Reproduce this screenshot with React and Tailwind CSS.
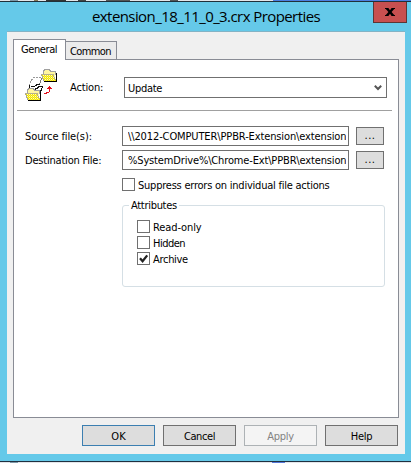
import React from "react";

const Check = () => (
  <svg width="11" height="11" viewBox="0 0 11 11">
    <path d="M2 5.2 L4.6 8.2 L9.2 2.4" fill="none" stroke="#222" strokeWidth="2.3" />
  </svg>
);

function CheckRow({ label, checked, track = "" }) {
  return (
    <div className="flex h-4 items-start">
      <span className="mt-[1px] h-[13px] w-[13px] shrink-0 border border-[#707070] bg-white">{checked && <Check />}</span>
      <span className={`ml-[3px] ${track}`}>{label}</span>
    </div>
  );
}

function FileRow({ label, value, track = "", vtrack = "" }) {
  return (
    <div className="flex h-5 items-center">
      <span className={`w-[97px] shrink-0 pt-[2px] leading-[18px] ${track}`}>{label}</span>
      <div className="flex h-5 w-[227px] shrink-0 items-center border border-[#707070] bg-white pl-[5px] pr-[2px]">
        <span className={`block w-full overflow-hidden pt-[2px] leading-[16px] ${vtrack}`}>{value}</span>
      </div>
      <button className="ml-[7px] flex h-[18px] w-7 shrink-0 items-center justify-center border border-[#707070] bg-[#dddddd] leading-4 tracking-[0.5px]">...</button>
    </div>
  );
}

const Folder = ({ x, y }) => (
  <g transform={`translate(${x} ${y})`}>
    <path d="M2 2 H3 V1 H8 V2 H9 V3 H14 V10 H2z" fill="#fff6a0" />
    <path d="M2 6 V2 H3 V1 H8 V2 H9 V3 H14 V6" transform="translate(.5 -.5)" fill="none" stroke="#a0a0a0" />
    <path d="M0 5 H12 L15 12 H3z" fill="url(#dots)" />
    <path d="M0 5.5 H12 L14.5 11" fill="none" stroke="#b5b090" />
    <path d="M0.5 6 L3 12" fill="none" stroke="#a0a0a0" />
    <path d="M15 4 H16 V13 H3 V12 H15z" fill="#000" />
  </g>
);

const FilesIcon = () => (
  <svg className="shrink-0" width="33" height="33" viewBox="0 0 33 33" shapeRendering="crispEdges">
    <defs>
      <pattern id="dots" width="2" height="2" patternUnits="userSpaceOnUse">
        <rect width="2" height="2" fill="#f2e600" />
        <rect width="1" height="1" fill="#fffbb8" />
        <rect x="1" y="1" width="1" height="1" fill="#f8ee50" />
      </pattern>
    </defs>
    <Folder x="16" y="0" />
    <path d="M8 8.5 H16.5 L14 16.5 L5 18.5 V13z" fill="#fff" />
    <path d="M15.5 8.5 H8.5 L5.5 12.5 L4.5 16" fill="none" stroke="#999" strokeDasharray="2 1" />
    <path d="M16.5 9 L15.5 13 L13.5 16" fill="none" stroke="#777" />
    <path d="M5 17.5 L8 19 L11.5 15.5 L15 16 L17.5 18 L14 24 H6z" fill="#fff" />
    <path d="M4.5 16 V19 L7.5 21 M6 17.5 H9.5 L12 15.5 H14.5 M10 19.5 H12 L14 17.5 H17.5 L16.5 21 L14 24 M10 20 L12.5 23" fill="none" stroke="#111" />
    <Folder x="0" y="19" />
    <path d="M19 24.5 H22 M21 23.5 H24 M24.5 23 V18" fill="none" stroke="#e0101c" strokeWidth="1" />
    <path d="M24 17h1v1h1v1h1v1h-5v-1h1v-1h1z" fill="#e0101c" />
  </svg>
);

function DialogButton({ label, look, track = "" }) {
  return (
    <button className={`flex h-[21px] w-[73px] items-center justify-center border ${look}`}>
      <span className={`pt-[2px] leading-[17px] ${track}`}>{label}</span>
    </button>
  );
}

export default function App() {
  return (
    <div className="flex h-[463px] w-[411px] flex-col overflow-hidden whitespace-pre bg-[#65c9e9] font-['DejaVu_Sans_Condensed','DejaVu_Sans',sans-serif] text-[11px] text-black [font-stretch:condensed]">
      <div className="flex h-px shrink-0 bg-[#e3e6ea]">
        <span className="ml-[10px] w-2 bg-[#7e98a8]" />
        <span className="ml-4 w-1 bg-[#887a55]" />
        <span className="ml-2 w-5 bg-[#333]" />
        <span className="ml-3 w-2 bg-[#444]" />
        <span className="ml-5 w-6 bg-[#555]" />
        <span className="ml-10 w-2 bg-[#555]" />
        <span className="ml-auto w-[138px] bg-[#4c7fe0]" />
      </div>
      <div className="h-px shrink-0 bg-[#20303a]" />
      <header className="flex h-[29px] shrink-0 items-start">
        <h1 className="ml-[92px] w-[281px] font-['Open_Sans','Noto_Sans',sans-serif] text-[15px] font-normal leading-[29px] tracking-[-0.58px] [font-stretch:normal]">
          extension_18_11_0_3.crx Properties
        </h1>
        <button aria-label="Close" className="flex h-[21px] w-[34px] items-center justify-center border border-t-0 border-[#5d3635] bg-[#c75050]">
          <svg width="10" height="8" viewBox="0 0 10 8">
            <path d="M0 0h3.4L5 2.3 6.6 0H10v1H9.2L6.6 4 9.2 7H10v1H6.6L5 5.7 3.4 8H0V7h.8L3.4 4 .8 1H0z" fill="#000" />
          </svg>
        </button>
      </header>
      <main className="ml-[7px] flex h-[423px] w-[398px] shrink-0 flex-col border-t border-[#83b3c5] bg-[#f0f0f0] px-[6px]">
        <nav className="mt-[6px] flex h-[21px] items-end">
          <div className="z-10 -mb-px h-[21px] w-[53px] border border-b-0 border-[#898c95] bg-white pl-[7px] leading-[19px] tracking-[-0.4px]">
            General
          </div>
          <div className="h-[18px] w-[51px] border border-b-0 border-l-0 border-[#898c95] bg-[#ebebeb] pl-[4px] leading-[19px] tracking-[-0.6px]">
            Common
          </div>
        </nav>
        <section className="flex h-[359px] w-[386px] shrink-0 flex-col border border-[#898c95] bg-white">
          <div className="mt-[10px] flex h-[35px] items-center pl-[11px]">
            <div className="-mt-[4px]">
              <FilesIcon />
            </div>
            <span className="ml-[12px] w-[54px] leading-5 tracking-[-0.15px]">Action:</span>
            <div className="flex h-[21px] w-[263px] items-center justify-between border border-[#707070] bg-white pl-[3px] pr-[4px]">
              <span className="pt-[2px] leading-[17px] tracking-[-0.3px]">Update</span>
              <svg width="8" height="6" viewBox="0 0 8 6">
                <path d="M.8 .8 L4 4 L7.2 .8" fill="none" stroke="#555" strokeWidth="2" />
              </svg>
            </div>
          </div>
          <div className="ml-[3px] mt-[5px] h-px w-[375px] shrink-0 bg-[#a0a0a0]" />
          <div className="mt-[15px] flex flex-col gap-1 pl-[11px]">
            <FileRow label="Source file(s):" value={"\\\\2012-COMPUTER\\PPBR-Extension\\extension"} track="tracking-[-0.1px]" vtrack="tracking-[-0.12px]" />
            <FileRow label="Destination File:" value={"%SystemDrive%\\Chrome-Ext\\PPBR\\extension"} track="tracking-[-0.2px]" vtrack="tracking-[-0.15px]" />
          </div>
          <div className="ml-[108px] mt-[7px] leading-[18px]">
            <CheckRow label="Suppress errors on individual file actions" track="tracking-[-0.23px]" />
          </div>
          <fieldset className="ml-[108px] mt-1 h-[90px] w-[263px] rounded-[3px] border border-[#d5dfe5] pl-[14px]">
            <legend className="-ml-[8px] h-4 px-[2px] pt-[2px] leading-[14px] tracking-[-0.3px]">Attributes</legend>
            <div className="mt-[6px] flex flex-col leading-[17px]">
              <CheckRow label="Read-only" track="tracking-[-0.1px]" />
              <CheckRow label="Hidden" track="tracking-[-0.5px]" />
              <CheckRow label="Archive" checked track="tracking-[-0.3px]" />
            </div>
          </fieldset>
        </section>
        <footer className="ml-[69px] mt-[7px] flex gap-2">
          <DialogButton label="OK" look="border-[#3c7fb1] bg-[#dddddd]" />
          <DialogButton label="Cancel" look="border-[#707070] bg-[#dddddd]" track="tracking-[-0.4px]" />
          <DialogButton label="Apply" look="border-[#adb2b5] bg-[#f4f4f4] text-[#838383]" track="tracking-[-0.3px]" />
          <DialogButton label="Help" look="border-[#707070] bg-[#dddddd]" track="tracking-[-0.3px]" />
        </footer>
      </main>
      <div className="h-[7px] shrink-0" />
      <div className="h-px shrink-0 bg-[#203040]" />
      <div className="flex h-px shrink-0 bg-[#e3e6ea]">
        <span className="ml-[10px] w-2 bg-[#7e98a8]" />
        <span className="ml-[254px] w-[13px] bg-[#5578d8]" />
      </div>
    </div>
  );
}
